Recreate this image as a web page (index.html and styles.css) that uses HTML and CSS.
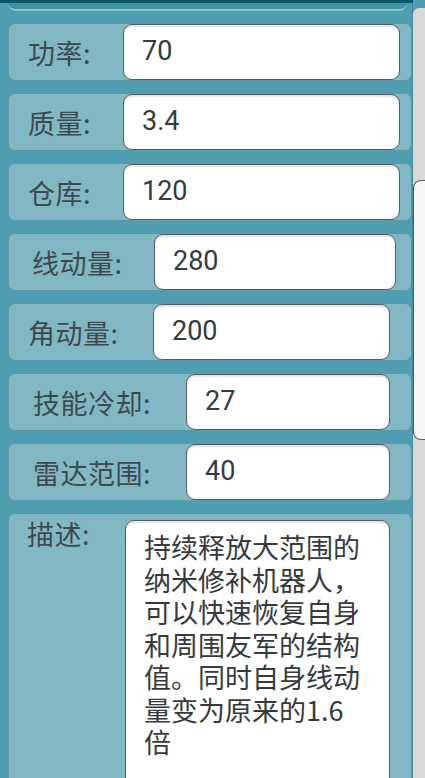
FILE: index.html
```html
<!DOCTYPE html>
<html lang="zh">
<head>
<meta charset="utf-8">
<title>属性</title>
<link rel="stylesheet" href="styles.css">
</head>
<body>
<div class="screen">
  <div class="panel">
    <div class="topbar"></div>
    <div class="stub"></div>
    <div class="list">
      <div class="row r-a"><span class="label">功率:</span><div class="field">70</div></div>
      <div class="row r-a"><span class="label">质量:</span><div class="field">3.4</div></div>
      <div class="row r-a"><span class="label">仓库:</span><div class="field">120</div></div>
      <div class="row r-b"><span class="label">线动量:</span><div class="field">280</div></div>
      <div class="row r-c"><span class="label">角动量:</span><div class="field">200</div></div>
      <div class="row r-d"><span class="label">技能冷却:</span><div class="field">27</div></div>
      <div class="row r-e"><span class="label">雷达范围:</span><div class="field">40</div></div>
      <div class="row desc"><span class="label">描述:</span><div class="field area">持续释放大范围的纳米修补机器人，可以快速恢复自身和周围友军的结构值。同时自身线动量变为原来的1.6倍</div></div>
    </div>
  </div>
  <div class="scrollbar">
    <div class="thumb"></div>
  </div>
</div>
</body>
</html>
```
FILE: styles.css
```css
html, body {
  margin: 0;
  padding: 0;
}
body {
  background: #4f9db0;
  font-family: "Roboto", "Noto Sans CJK SC", sans-serif;
  color: #353b3d;
  overflow: hidden;
}
.screen {
  display: flex;
  width: 425px;
  height: 778px;
  overflow: hidden;
}
.panel {
  width: 413px;
  display: flex;
  flex-direction: column;
  background: #4f9db0;
  box-shadow: inset -1px 0 0 #3d8a9c;
}
.topbar {
  height: 3px;
  background: #0b566a;
  flex: none;
}
.stub {
  height: 6px;
  margin: 0 6px 0 8px;
  background: #3f91a4;
  border-bottom: 2px solid #8fc4cf;
  border-radius: 0 0 8px 8px;
  flex: none;
}
.list {
  display: flex;
  flex-direction: column;
  gap: 12px;
  padding: 12px 0 0 8px;
}
.row {
  width: 404px;
  height: 58px;
  box-sizing: border-box;
  border: 1px solid #5e98a7;
  border-radius: 7px;
  background: #82b8c4;
  display: flex;
  align-items: center;
  flex: none;
}
.label {
  font-family: "Noto Sans CJK SC", sans-serif;
  font-size: 27px;
  color: #3c4a4e;
  white-space: nowrap;
  letter-spacing: 0.5px;
}
.field {
  height: 56px;
  box-sizing: border-box;
  margin-left: auto;
  background: #ffffff;
  border: 1.5px solid #575c5e;
  border-radius: 9px;
  box-shadow: inset 0 2px 2px rgba(0,0,0,0.12);
  padding-left: 18px;
  font-size: 27px;
  line-height: 53px;
  color: #353b3d;
}
.r-a .label { padding-left: 19px; }
.r-a .field { width: 277px; margin-right: 11px; }
.r-b .label { padding-left: 23px; }
.r-b .field { width: 242px; margin-right: 15px; }
.r-c .label { padding-left: 19px; }
.r-c .field { width: 237px; margin-right: 21px; }
.r-d .label, .r-e .label { padding-left: 24px; }
.r-d .field, .r-e .field { width: 204px; margin-right: 21px; }
.desc {
  height: 320px;
  align-items: flex-start;
}
.desc .label {
  padding-left: 18px;
  padding-top: 2px;
  line-height: 36px;
}
.field.area {
  width: 265px;
  height: 300px;
  margin-right: 21px;
  margin-top: 6px;
  padding: 10px 26px 0 18px;
  font-family: "Noto Sans CJK SC", sans-serif;
  font-size: 27px;
  line-height: 32.5px;
  word-break: break-all;
}
.scrollbar {
  width: 12px;
  flex: none;
  margin-top: 8px;
  background: #d9d9d9;
  border-radius: 6px 0 0 0;
  display: flex;
  flex-direction: column;
}
.thumb {
  margin-top: 172px;
  height: 258px;
  background: #f6f6f6;
  border: 1px solid #5a5a5a;
  border-right: none;
  border-radius: 8px 0 0 8px;
}
```
